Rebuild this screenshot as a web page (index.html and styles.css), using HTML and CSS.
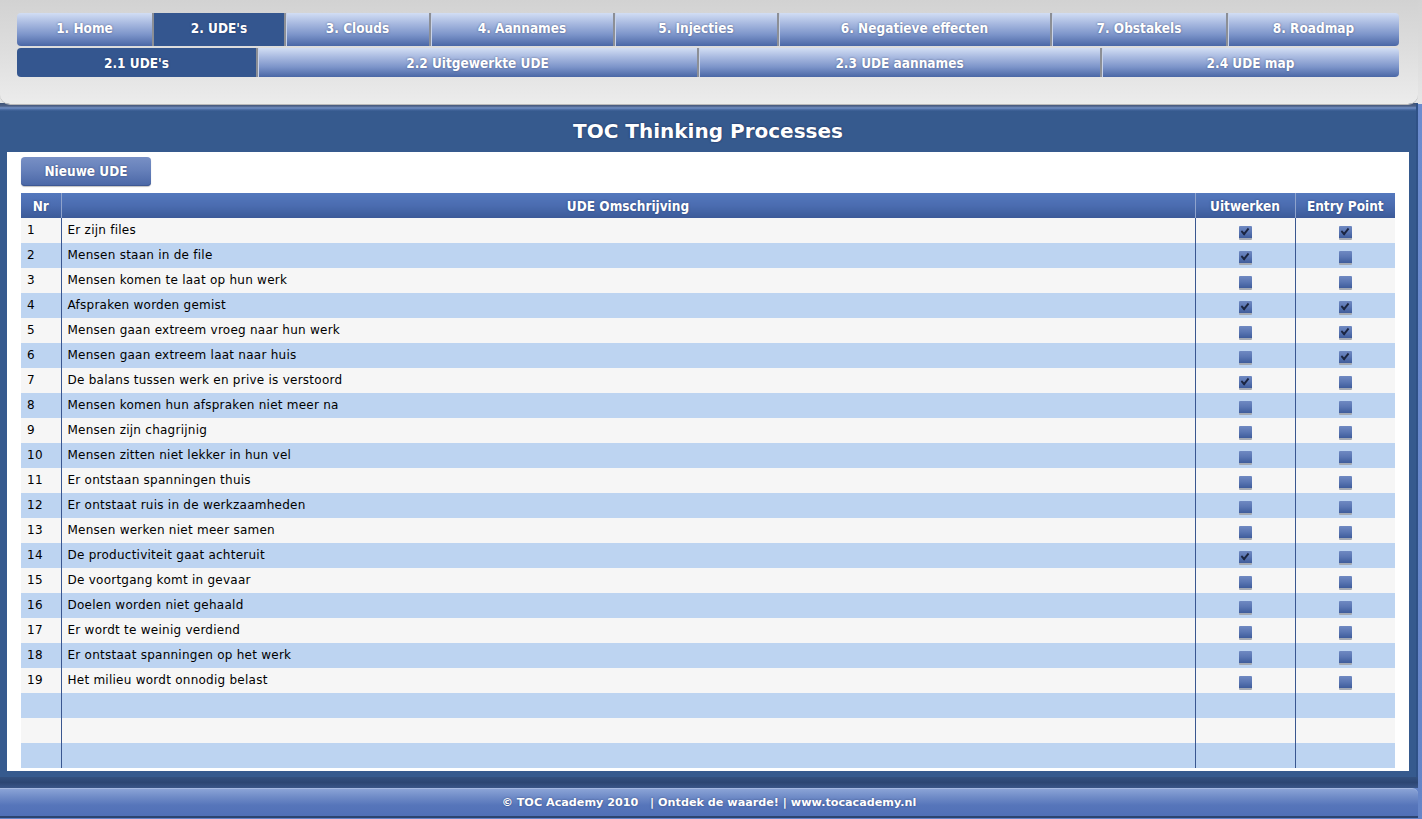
FILE: index.html
```html
<!DOCTYPE html>
<html lang="nl">
<head>
<meta charset="utf-8">
<title>TOC Thinking Processes</title>
<link rel="stylesheet" href="styles.css">
</head>
<body>
<div class="page">
  <header class="header">
    <nav class="nav nav-main">
      <a class="tab t1">1. Home</a>
      <a class="tab t2 active">2. UDE's</a>
      <a class="tab t3">3. Clouds</a>
      <a class="tab t4">4. Aannames</a>
      <a class="tab t5">5. Injecties</a>
      <a class="tab t6">6. Negatieve effecten</a>
      <a class="tab t7">7. Obstakels</a>
      <a class="tab t8">8. Roadmap</a>
    </nav>
    <nav class="nav nav-sub">
      <a class="tab s1 active">2.1 UDE's</a>
      <a class="tab s2">2.2 Uitgewerkte UDE</a>
      <a class="tab s3">2.3 UDE aannames</a>
      <a class="tab s4">2.4 UDE map</a>
    </nav>
  </header>

  <main class="main">
    <h1 class="title">TOC Thinking Processes</h1>
    <section class="content">
      <button class="btn">Nieuwe UDE</button>
      <table class="grid">
        <colgroup>
          <col class="c-nr">
          <col class="c-desc">
          <col class="c-chk">
          <col class="c-chk">
        </colgroup>
        <thead>
          <tr>
            <th>Nr</th>
            <th>UDE Omschrijving</th>
            <th>Uitwerken</th>
            <th>Entry Point</th>
          </tr>
        </thead>
        <tbody>
          <tr><td>1</td><td>Er zijn files</td><td><span class="cb on"></span></td><td><span class="cb on"></span></td></tr>
          <tr><td>2</td><td>Mensen staan in de file</td><td><span class="cb on"></span></td><td><span class="cb"></span></td></tr>
          <tr><td>3</td><td>Mensen komen te laat op hun werk</td><td><span class="cb"></span></td><td><span class="cb"></span></td></tr>
          <tr><td>4</td><td>Afspraken worden gemist</td><td><span class="cb on"></span></td><td><span class="cb on"></span></td></tr>
          <tr><td>5</td><td>Mensen gaan extreem vroeg naar hun werk</td><td><span class="cb"></span></td><td><span class="cb on"></span></td></tr>
          <tr><td>6</td><td>Mensen gaan extreem laat naar huis</td><td><span class="cb"></span></td><td><span class="cb on"></span></td></tr>
          <tr><td>7</td><td>De balans tussen werk en prive is verstoord</td><td><span class="cb on"></span></td><td><span class="cb"></span></td></tr>
          <tr><td>8</td><td>Mensen komen hun afspraken niet meer na</td><td><span class="cb"></span></td><td><span class="cb"></span></td></tr>
          <tr><td>9</td><td>Mensen zijn chagrijnig</td><td><span class="cb"></span></td><td><span class="cb"></span></td></tr>
          <tr><td>10</td><td>Mensen zitten niet lekker in hun vel</td><td><span class="cb"></span></td><td><span class="cb"></span></td></tr>
          <tr><td>11</td><td>Er ontstaan spanningen thuis</td><td><span class="cb"></span></td><td><span class="cb"></span></td></tr>
          <tr><td>12</td><td>Er ontstaat ruis in de werkzaamheden</td><td><span class="cb"></span></td><td><span class="cb"></span></td></tr>
          <tr><td>13</td><td>Mensen werken niet meer samen</td><td><span class="cb"></span></td><td><span class="cb"></span></td></tr>
          <tr><td>14</td><td>De productiviteit gaat achteruit</td><td><span class="cb on"></span></td><td><span class="cb"></span></td></tr>
          <tr><td>15</td><td>De voortgang komt in gevaar</td><td><span class="cb"></span></td><td><span class="cb"></span></td></tr>
          <tr><td>16</td><td>Doelen worden niet gehaald</td><td><span class="cb"></span></td><td><span class="cb"></span></td></tr>
          <tr><td>17</td><td>Er wordt te weinig verdiend</td><td><span class="cb"></span></td><td><span class="cb"></span></td></tr>
          <tr><td>18</td><td>Er ontstaat spanningen op het werk</td><td><span class="cb"></span></td><td><span class="cb"></span></td></tr>
          <tr><td>19</td><td>Het milieu wordt onnodig belast</td><td><span class="cb"></span></td><td><span class="cb"></span></td></tr>
          <tr class="empty"><td></td><td></td><td></td><td></td></tr>
          <tr class="empty"><td></td><td></td><td></td><td></td></tr>
          <tr class="empty"><td></td><td></td><td></td><td></td></tr>
        </tbody>
      </table>
    </section>
  </main>

  <div class="band"></div>
  <footer class="footer">© TOC Academy 2010&nbsp;&nbsp; | Ontdek de waarde! | www.tocacademy.nl</footer>
</div>
</body>
</html>
```

FILE: styles.css
```css
html, body {
  margin: 0;
  padding: 0;
}

body {
  background: linear-gradient(to bottom, #d3d3d3 0, #e6e6e6 104px, #6c8ccf 104px, #6585c8 100%);
  font-family: "DejaVu Sans", Verdana, sans-serif;
  width: 1422px;
  height: 819px;
  overflow: hidden;
}

.page {
  width: 1418px;
  display: flex;
  flex-direction: column;
}

/* ---------- header ---------- */
.header {
  height: 104px;
  box-sizing: border-box;
  padding: 13px 19px 0 17px;
  background: linear-gradient(to bottom, #d2d2d2 0, #dedede 50%, #ececec 100%);
  border-radius: 0 0 10px 10px;
  position: relative;
  z-index: 2;
  box-shadow: 0 1px 0 #b9b9b9;
}

.nav {
  display: flex;
}

.nav-main {
  height: 33px;
}

.nav-main .tab {
  padding-bottom: 3px;
}

.nav-sub {
  height: 29px;
  margin-top: 2px;
}

.tab {
  display: flex;
  align-items: center;
  justify-content: center;
  box-sizing: border-box;
  font-family: "DejaVu Sans Condensed", "DejaVu Sans", sans-serif;
  font-stretch: condensed;
  font-weight: bold;
  font-size: 13.5px;
  color: #ffffff;
  text-shadow: 0 0 2px rgba(20, 30, 70, 0.55);
  background: linear-gradient(to bottom, #d2def4 0, #aabbe1 30%, #7d95ca 65%, #4a67a6 100%);
  border-left: 2px solid #8c8f96;
  box-shadow: inset 1px 0 0 #c8d3ea;
  cursor: pointer;
}

.tab:first-child {
  border-left: none;
  border-radius: 4px 0 0 4px;
  box-shadow: none;
}

.tab:last-child {
  border-radius: 0 4px 4px 0;
}

.tab.active {
  background: #34568f;
  box-shadow: none;
}

.t1 { width: 135px; }
.t2 { width: 132px; }
.t3 { width: 145px; }
.t4 { width: 184px; }
.t5 { width: 164px; }
.t6 { width: 273px; }
.t7 { width: 176px; }
.t8 { width: 173px; }

.s1 { width: 239px; }
.s2 { width: 441px; }
.s3 { width: 403px; }
.s4 { width: 299px; }

/* ---------- main panel ---------- */
.main {
  background: linear-gradient(to bottom, #3f5478 0, #4c5f84 3px, #7391c6 5px, #5474ab 6px, #365a8e 8px, #365a8e 100%);
  padding: 0 7px 6px 7px;
  margin-top: -1px;
  border-right: 2px solid #2f5186;
  width: 1418px;
  box-sizing: border-box;
}

.title {
  margin: 0;
  height: 49px;
  box-sizing: border-box;
  padding-top: 7px;
  display: flex;
  align-items: center;
  justify-content: center;
  font-family: "DejaVu Sans", Verdana, sans-serif;
  font-weight: bold;
  font-size: 20px;
  color: #ffffff;
  text-shadow: 0 0 2px rgba(10, 20, 60, 0.7);
}

.content {
  background: #ffffff;
  width: 1402px;
  box-sizing: border-box;
  padding: 5px 14px 3px 14px;
}

.btn {
  display: block;
  width: 130px;
  height: 29px;
  margin: 0 0 7px 0;
  border: none;
  border-radius: 4px;
  background: linear-gradient(to bottom, #7890c5 0, #6680ba 45%, #4a67a6 100%);
  box-shadow: inset 0 -1px 0 #3e5893, 0 1px 1px rgba(0, 0, 0, 0.25);
  font-family: "DejaVu Sans Condensed", "DejaVu Sans", sans-serif;
  font-stretch: condensed;
  font-weight: bold;
  font-size: 13.5px;
  color: #ffffff;
  text-shadow: 0 0 2px rgba(20, 30, 70, 0.55);
  padding: 0 0 2px 0;
}

/* ---------- table ---------- */
.grid {
  width: 1374px;
  border-collapse: collapse;
  table-layout: fixed;
}

.c-nr { width: 40px; }
.c-chk { width: 100px; }

.grid th {
  height: 25px;
  padding: 0;
  background: linear-gradient(to bottom, #5478bd 0, #4b6cb0 50%, #3b5a98 100%);
  font-family: "DejaVu Sans Condensed", "DejaVu Sans", sans-serif;
  font-stretch: condensed;
  font-weight: bold;
  font-size: 13.5px;
  color: #ffffff;
  text-shadow: 0 0 2px rgba(20, 30, 70, 0.55);
  text-align: center;
  border-left: 1px solid #8fa3cc;
}

.grid th:first-child {
  border-left: none;
}

.grid td {
  height: 25px;
  padding: 0 0 2px 6px;
  box-sizing: border-box;
  font-size: 12px;
  letter-spacing: 0.25px;
  color: #000000;
  border-left: 1px solid #3a5790;
  white-space: nowrap;
}

.grid td:first-child {
  border-left: none;
}

.grid td:nth-child(3),
.grid td:nth-child(4) {
  text-align: center;
  padding: 5px 0 0 0;
}

.grid tbody tr:nth-child(odd) td {
  background: #f6f6f6;
}

.grid tbody tr:nth-child(even) td {
  background: #bdd4f1;
}

/* ---------- checkbox ---------- */
.cb {
  display: inline-block;
  width: 13px;
  height: 14px;
  box-sizing: border-box;
  vertical-align: middle;
  background: linear-gradient(to bottom, #6f89c2 0, #5a76b3 50%, #3f5c9b 100%);
  border-bottom: 2px solid #a3a9b4;
  border-radius: 1px;
  position: relative;
}

.cb.on::after {
  content: "";
  position: absolute;
  top: 2px;
  left: 2px;
  width: 6px;
  height: 3px;
  border-left: 2px solid #1b2540;
  border-bottom: 2px solid #1b2540;
  transform: rotate(-50deg) skewX(-8deg);
  transform-origin: center;
}

/* ---------- footer ---------- */
.band {
  height: 11px;
  background: linear-gradient(to bottom, #33507f 0, #2c4673 50%, #3a5688 100%);
  width: 1418px;
}

.footer {
  height: 30px;
  box-sizing: border-box;
  width: 1418px;
  background: linear-gradient(to bottom, #8aa3d6 0, #6f8bc7 30%, #5675ba 60%, #5070b7 100%);
  border-top: 1px solid #a4b8e0;
  border-bottom: 2px solid #2c4470;
  border-radius: 0 6px 0 0;
  display: flex;
  align-items: center;
  justify-content: center;
  font-family: "DejaVu Sans", Verdana, sans-serif;
  font-weight: bold;
  font-size: 11.2px;
  color: #ffffff;
  text-shadow: 0 0 2px rgba(20, 30, 70, 0.55);
  white-space: pre;
}
```
